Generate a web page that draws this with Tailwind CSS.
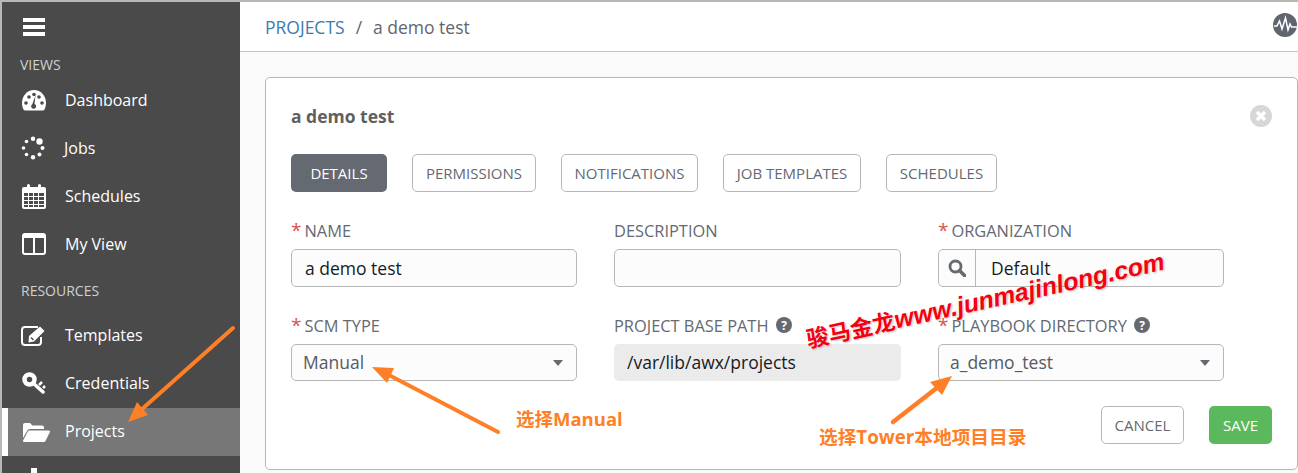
<!DOCTYPE html>
<html lang="en">
<head>
    <meta charset="UTF-8" />
    <title>Projects</title>
    <script src="https://cdn.jsdelivr.net/npm/@tailwindcss/browser@4"></script>
</head>
<body class="bg-white font-['Open_Sans','Noto_Sans_CJK_SC',sans-serif] overflow-hidden">
<div class="relative flex h-[473px] w-[1298px] overflow-hidden border-t-2 border-l-2 border-[#b7b7b7]">

    <!-- sidebar -->
    <aside class="flex w-[238px] shrink-0 flex-col bg-[#4a4a4a] text-white">
        <div class="flex h-[47px] shrink-0 items-center pl-[21px]">
            <svg width="22" height="18" viewBox="0 0 22 18" class="mt-[3px]"><path d="M0 0h22v4H0zM0 7h22v4H0zM0 14h22v4H0z" fill="#fff"/></svg>
        </div>
        <div class="h-[27px] shrink-0 pl-[18px] pt-[6px] text-[14px] leading-[20px] text-[#d0d0d0]">VIEWS</div>

        <div class="flex h-[48px] shrink-0 items-center">
            <div class="flex w-[63px] justify-center pl-[1px]">
                <svg width="26" height="22" viewBox="0 0 26 22"><path fill="#fff" d="M13 1C6 1 1 7 1 14c0 2.500.6 4.800 1.700 6.800.3.500.8.700 1.300.700h18c.5 0 1-.2 1.300-.7C24.400 18.800 25 16.500 25 14 25 7 20 1 13 1z"/><circle cx="5" cy="14" r="1.800" fill="#4a4a4a"/><circle cx="8" cy="8" r="1.800" fill="#4a4a4a"/><circle cx="13" cy="5.500" r="1.800" fill="#4a4a4a"/><circle cx="18" cy="8" r="1.800" fill="#4a4a4a"/><circle cx="21" cy="14" r="1.800" fill="#4a4a4a"/><path d="M14.500 6.500l-1 8.500a2.500 2.500 0 1 1-2.200.2z" fill="#4a4a4a"/></svg>
            </div>
            <span class="text-[16px]">Dashboard</span>
        </div>
        <div class="flex h-[48px] shrink-0 items-center">
            <div class="flex w-[62px] justify-center">
                <svg width="24" height="24" viewBox="0 0 24 24" fill="#fff"><circle cx="12" cy="2.800" r="2.200"/><circle cx="18.500" cy="5.500" r="3.200"/><circle cx="21.500" cy="12" r="2"/><circle cx="18.500" cy="18.500" r="2"/><circle cx="12" cy="21.300" r="2.200"/><circle cx="5.500" cy="18.500" r="1.800"/><circle cx="2.500" cy="12" r="1.800"/><circle cx="5.500" cy="5.500" r="1.800"/></svg>
            </div>
            <span class="text-[16px]">Jobs</span>
        </div>
        <div class="flex h-[48px] shrink-0 items-center">
            <div class="flex w-[63px] justify-center">
                <svg width="24" height="25" viewBox="0 0 24 25"><path fill="#fff" d="M2 3h3V1.500a1.500 1.500 0 0 1 3 0V3h8V1.500a1.500 1.500 0 0 1 3 0V3h3a2 2 0 0 1 2 2v18a2 2 0 0 1-2 2H2a2 2 0 0 1-2-2V5a2 2 0 0 1 2-2z"/><path fill="#4a4a4a" d="M2 9h4v3H2zM7 9h4v3H7zM12 9h4v3h-4zM17 9h5v3h-5zM2 13h4v3H2zM7 13h4v3H7zM12 13h4v3h-4zM17 13h5v3h-5zM2 17h4v3H2zM7 17h4v3H7zM12 17h4v3h-4zM17 17h5v3h-5zM2 21h4v2H2zM7 21h4v2H7zM12 21h4v2h-4zM17 21h5v2h-5z"/></svg>
            </div>
            <span class="text-[16px]">Schedules</span>
        </div>
        <div class="flex h-[48px] shrink-0 items-center">
            <div class="flex w-[63px] justify-center">
                <svg width="24" height="22" viewBox="0 0 24 22" fill="none" stroke="#fff" stroke-width="2"><rect x="1" y="1" width="22" height="20" rx="2"/><path d="M1 3h22" stroke-width="4"/><path d="M12 1v20"/></svg>
            </div>
            <span class="text-[16px]">My View</span>
        </div>

        <div class="flex h-[43px] shrink-0 items-end pb-[10px] pl-[19px] text-[14px] leading-[20px] text-[#d0d0d0]">RESOURCES</div>

        <div class="flex h-[48px] shrink-0 items-center">
            <div class="flex w-[63px] justify-center">
                <svg width="26" height="21" viewBox="0 0 26 21"><path fill="none" stroke="#fff" stroke-width="2" d="M20 12v5a3 3 0 0 1-3 3H4a3 3 0 0 1-3-3V5a3 3 0 0 1 3-3h13"/><path fill="#fff" d="M8 11L19 1.500l4.500 4.500L13 16.500l-5.500 1z"/><path fill="#4a4a4a" d="M9.500 13l2.500 2.500 1-1-2.500-2.500z"/></svg>
            </div>
            <span class="text-[16px]">Templates</span>
        </div>
        <div class="flex h-[48px] shrink-0 items-center">
            <div class="flex w-[63px] justify-center">
                <svg width="24" height="22" viewBox="0 0 24 22"><circle cx="7.500" cy="7.500" r="5" fill="none" stroke="#fff" stroke-width="4.500"/><path d="M11 11l10 9" stroke="#fff" stroke-width="3.500" stroke-linecap="round"/><path d="M17 13l3-3M21 16l2-2" stroke="#fff" stroke-width="2.500"/></svg>
            </div>
            <span class="text-[16px]">Credentials</span>
        </div>
        <div class="mt-[1px] flex h-[48px] shrink-0 items-center border-l-[6px] border-white bg-[#777]">
            <div class="flex w-[57px] justify-center">
                <svg width="27" height="19" viewBox="0 0 27 19" fill="#fff"><path d="M0 15V2a2 2 0 0 1 2-2h5l2.500 2.500H19a2 2 0 0 1 2 2V6H7a3 3 0 0 0-2.800 1.800z"/><path d="M6.500 7.500H26a1 1 0 0 1 .9 1.500L22.500 18a2 2 0 0 1-1.800 1H1a1 1 0 0 1-.9-1.500L4.800 8.500a2 2 0 0 1 1.700-1z"/></svg>
            </div>
            <span class="pb-[2px] text-[16px]">Projects</span>
        </div>
        <div class="flex h-[48px] shrink-0 items-start">
            <div class="flex w-[63px] justify-center pt-[12px]">
                <svg width="24" height="24" viewBox="0 0 24 24" fill="#fff"><path d="M9 0h6v6h5v6H4V6h5z"/></svg>
            </div>
        </div>
    </aside>

    <!-- main -->
    <main class="flex min-w-0 flex-1 flex-col bg-[#fafafa]">
        <header class="flex h-[50px] shrink-0 items-center justify-between border-b border-[#c4c4c4] bg-white pl-[25px] pr-[1px]">
            <div class="flex items-center pt-[1px] text-[17.500px] text-[#5f6670]">
                <span class="text-[#3d7ab0]">PROJECTS</span>
                <span class="mx-[11px]">/</span>
                <span>a demo test</span>
            </div>
            <svg width="24" height="24" viewBox="0 0 24 24" class="mb-[3px]"><circle cx="12" cy="12" r="12" fill="#5f6670"/><path d="M1 13h3l2.500-5 2.500 8 3.500-11 2.500 12 2-6 1.500 3H24" fill="none" stroke="#fff" stroke-width="1.500"/></svg>
        </header>

        <div class="pl-[25px] pt-[25px]">
            <section class="h-[393px] w-[1033px] rounded-[5px] border border-[#b7b7b7] bg-white pl-[25px] pr-[25px]">
                <div class="flex h-[76px] items-center justify-between">
                    <h1 class="text-[17.500px] font-bold text-[#5f5f5f]">a demo test</h1>
                    <svg width="22" height="22" viewBox="0 0 22 22"><circle cx="11" cy="11" r="11" fill="#d7d7d7"/><path d="M7 7l8 8M15 7l-8 8" stroke="#fff" stroke-width="3.500"/></svg>
                </div>

                <div class="flex gap-[25px] text-[15px]">
                    <div class="flex h-[38px] w-[96px] items-center justify-center rounded-[5px] bg-[#646972] text-white">DETAILS</div>
                    <div class="flex h-[38px] w-[124px] items-center justify-center rounded-[5px] border border-[#b7b7b7] text-[#646972]">PERMISSIONS</div>
                    <div class="flex h-[38px] w-[137px] items-center justify-center rounded-[5px] border border-[#b7b7b7] text-[#646972]">NOTIFICATIONS</div>
                    <div class="flex h-[38px] w-[138px] items-center justify-center rounded-[5px] border border-[#b7b7b7] text-[#646972]">JOB TEMPLATES</div>
                    <div class="flex h-[38px] w-[111px] items-center justify-center rounded-[5px] border border-[#b7b7b7] text-[#646972]">SCHEDULES</div>
                </div>

                <div class="mt-[27px] grid w-[933px] grid-cols-[286px_287px_286px] gap-x-[37px] gap-y-[27px]">
                    <div>
                        <div class="flex h-[30px] items-start text-[16.400px] leading-[24px] text-[#646972]"><span class="mr-[3px] text-[#d9534f] text-[19px] leading-[22px]">*</span>NAME</div>
                        <div class="flex h-[38px] items-center rounded-[5px] border border-[#b7b7b7] bg-[#fcfcfc] pl-[13px] text-[17.500px] text-[#161b1f]">a demo test</div>
                    </div>
                    <div>
                        <div class="flex h-[30px] items-start text-[16.400px] leading-[24px] text-[#646972]">DESCRIPTION</div>
                        <div class="h-[38px] rounded-[5px] border border-[#b7b7b7] bg-[#fcfcfc]"></div>
                    </div>
                    <div>
                        <div class="flex h-[30px] items-start text-[16.400px] leading-[24px] text-[#646972]"><span class="mr-[3px] text-[#d9534f] text-[19px] leading-[22px]">*</span>ORGANIZATION</div>
                        <div class="flex h-[38px] items-center rounded-[5px] border border-[#b7b7b7] bg-[#fcfcfc] text-[17.500px] text-[#161b1f]">
                            <div class="flex h-full w-[37px] items-center justify-center border-r border-[#b7b7b7]">
                                <svg width="18" height="18" viewBox="0 0 18 18" fill="none" stroke="#646972"><circle cx="7.500" cy="7.500" r="5.500" stroke-width="2.800"/><path d="M11.500 11.500l5 5" stroke-width="3.500" stroke-linecap="round"/></svg>
                            </div>
                            <span class="pl-[15px]">Default</span>
                        </div>
                    </div>
                    <div>
                        <div class="flex h-[30px] items-start text-[16.400px] leading-[24px] text-[#646972]"><span class="mr-[3px] text-[#d9534f] text-[19px] leading-[22px]">*</span>SCM TYPE</div>
                        <div class="flex h-[37px] items-center justify-between rounded-[5px] border border-[#b7b7b7] bg-[#fcfcfc] pl-[11px] pr-[13px] text-[17.500px] text-[#555a62]">
                            <span>Manual</span>
                            <span class="h-0 w-0 border-x-[5px] border-t-[6px] border-x-transparent border-t-[#646972]"></span>
                        </div>
                    </div>
                    <div>
                        <div class="flex h-[30px] items-start gap-[7px] text-[16.400px] leading-[24px] text-[#646972]">PROJECT BASE PATH
                            <svg width="16" height="16" viewBox="0 0 16 16" class="mt-[3px]"><circle cx="8" cy="8" r="8" fill="#646972"/><text x="8" y="12.500" text-anchor="middle" font-size="12" font-weight="700" fill="#fff">?</text></svg>
                        </div>
                        <div class="flex h-[37px] items-center rounded-[5px] bg-[#ebebeb] pl-[13px] text-[17.500px] text-[#161b1f]">/var/lib/awx/projects</div>
                    </div>
                    <div>
                        <div class="flex h-[30px] items-start text-[16.400px] leading-[24px] text-[#646972]"><span class="mr-[3px] text-[#d9534f] text-[19px] leading-[22px]">*</span>PLAYBOOK DIRECTORY
                            <svg width="16" height="16" viewBox="0 0 16 16" class="ml-[7px] mt-[3px]"><circle cx="8" cy="8" r="8" fill="#646972"/><text x="8" y="12.500" text-anchor="middle" font-size="12" font-weight="700" fill="#fff">?</text></svg>
                        </div>
                        <div class="flex h-[37px] items-center justify-between rounded-[5px] border border-[#b7b7b7] bg-[#fcfcfc] pl-[11px] pr-[13px] text-[17.500px] text-[#555a62]">
                            <span>a_demo_test</span>
                            <span class="h-0 w-0 border-x-[5px] border-t-[6px] border-x-transparent border-t-[#646972]"></span>
                        </div>
                    </div>
                </div>

                <div class="mt-[25px] flex justify-end gap-[25px] text-[15px]">
                    <div class="flex h-[38px] w-[83px] items-center justify-center rounded-[5px] border border-[#b7b7b7] text-[#646972]">CANCEL</div>
                    <div class="flex h-[38px] w-[63px] items-center justify-center rounded-[5px] bg-[#5cb85c] text-white">SAVE</div>
                </div>
            </section>
        </div>
    </main>

    <!-- annotations drawn over the screenshot -->
    <svg width="1298" height="473" class="pointer-events-none absolute -left-[2px] -top-[2px]" fill="#ff7f27" stroke="none">
        <path d="M233 328L141 410" stroke="#ff7f27" stroke-width="4" stroke-linecap="round"/>
        <path d="M128 422L137 402L148 415z"/>
        <path d="M498 432L385 373" stroke="#ff7f27" stroke-width="4" stroke-linecap="round"/>
        <path d="M372 367L394 368L387 383z"/>
        <path d="M893 422L938 387" stroke="#ff7f27" stroke-width="4.500" stroke-linecap="round"/>
        <path d="M952 376L942 395L930 382z"/>
    </svg>
    <div class="absolute left-[514px] top-[404px] text-[18.500px] leading-[26px] font-bold text-[#ff7f27]">选择Manual</div>
    <div class="absolute left-[817px] top-[422px] text-[18.700px] leading-[26px] font-bold text-[#ff7f27]">选择Tower本地项目目录</div>
    <div class="absolute left-[805px] top-[324px] origin-left -rotate-[12.400deg] whitespace-nowrap font-['Liberation_Sans','Noto_Sans_CJK_SC',sans-serif] font-bold leading-[28px] text-[#f5000f] [text-shadow:0_0_2px_#fff,1px_1px_2px_rgba(0,0,0,0.3)]"><span class="text-[22.500px]">骏马金龙</span><span class="text-[24.800px] italic">www.junmajinlong.com</span></div>
</div>
</body>
</html>
